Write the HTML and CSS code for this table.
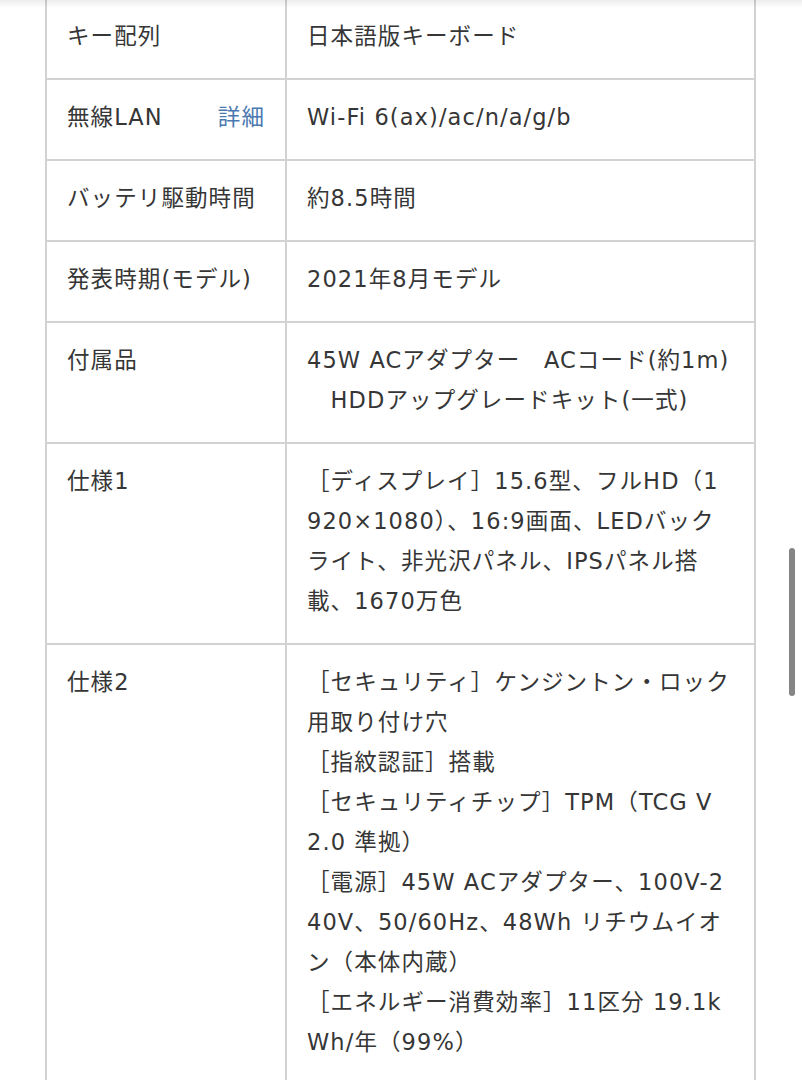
FILE: index.html
```html
<!DOCTYPE html>
<html lang="ja">
<head>
<meta charset="utf-8">
<title>仕様</title>
<link rel="stylesheet" href="styles.css">
</head>
<body>
<div class="top-shadow"></div>
<main class="page">
  <table class="spec">
    <tr>
      <th><span class="label">キー配列</span></th>
      <td>日本語版キーボード</td>
    </tr>
    <tr>
      <th><span class="label-row"><span>無線LAN</span><a class="more" href="#">詳細</a></span></th>
      <td>Wi-Fi 6(ax)/ac/n/a/g/b</td>
    </tr>
    <tr>
      <th>バッテリ駆動時間</th>
      <td>約8.5時間</td>
    </tr>
    <tr>
      <th>発表時期(モデル)</th>
      <td>2021年8月モデル</td>
    </tr>
    <tr>
      <th>付属品</th>
      <td>45W ACアダプター　ACコード(約1m)<br>　HDDアップグレードキット(一式)</td>
    </tr>
    <tr>
      <th>仕様1</th>
      <td>［ディスプレイ］15.6型、フルHD（1<br>920×1080）、16:9画面、LEDバック<br>ライト、非光沢パネル、IPSパネル搭<br>載、1670万色</td>
    </tr>
    <tr>
      <th>仕様2</th>
      <td>［セキュリティ］ケンジントン・ロック<br>用取り付け穴<br>［指紋認証］搭載<br>［セキュリティチップ］TPM（TCG V<br>2.0 準拠）<br>［電源］45W ACアダプター、100V-2<br>40V、50/60Hz、48Wh リチウムイオ<br>ン（本体内蔵）<br>［エネルギー消費効率］11区分 19.1k<br>Wh/年（99%）<br>&nbsp;</td>
    </tr>
  </table>
</main>
<div class="scrollbar"></div>
</body>
</html>
```

FILE: styles.css
```css
html, body {
  margin: 0;
  padding: 0;
  background: #ffffff;
  overflow: hidden;
}

body {
  font-family: "DejaVu Sans", "Noto Sans CJK JP", sans-serif;
  color: #363636;
  font-size: 22.5px;
  line-height: 40px;
  letter-spacing: 1.1px;
}

.page {
  padding: 0 46px 0 45px;
  margin-top: -3px;
}

.spec {
  width: 711px;
  border-collapse: collapse;
  table-layout: fixed;
}

.spec th,
.spec td {
  border: 2px solid #d2d2d2;
  padding: 17px 20px 22px 20px;
  vertical-align: top;
  text-align: left;
  font-weight: 400;
  white-space: nowrap;
}

.spec th {
  width: 198px;
}

.label-row {
  display: flex;
  justify-content: space-between;
}

.more {
  color: #4a78b0;
  text-decoration: none;
}

.top-shadow {
  position: fixed;
  top: 0;
  left: 0;
  right: 0;
  height: 8px;
  background: linear-gradient(to bottom, rgba(0, 0, 0, 0.07), rgba(0, 0, 0, 0));
  z-index: 2;
}

.scrollbar {
  position: fixed;
  top: 548px;
  left: 789px;
  width: 6px;
  height: 148px;
  border-radius: 3px;
  background: #858585;
}
```
